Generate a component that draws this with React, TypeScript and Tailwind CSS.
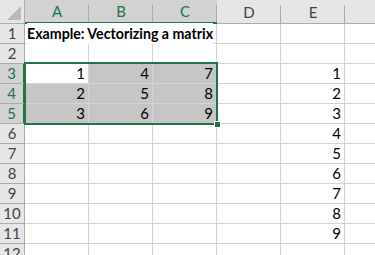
import React from "react";

const cols = ["A", "B", "C", "D", "E", ""];
const selCols = ["A", "B", "C"];

// values by row -> column
const data: Record<number, Record<string, string>> = {
  3: { A: "1", B: "4", C: "7", E: "1" },
  4: { A: "2", B: "5", C: "8", E: "2" },
  5: { A: "3", B: "6", C: "9", E: "3" },
  6: { E: "4" },
  7: { E: "5" },
  8: { E: "6" },
  9: { E: "7" },
  10: { E: "8" },
  11: { E: "9" },
};

function inSel(row: number, col: string) {
  return row >= 3 && row <= 5 && selCols.includes(col);
}

export default function App() {
  const rows = Array.from({ length: 12 }, (_, i) => i + 1);

  return (
    <div
      className="relative h-[255px] w-[375px] overflow-hidden bg-white text-[15px] text-black"
      style={{ fontFamily: "Lato, 'Liberation Sans', sans-serif" }}
    >
      {/* column headers */}
      <div className="flex h-[24px] bg-[#e6e6e6]">
        <div className="flex h-full w-[25px] shrink-0 items-end justify-end border-r border-b border-[#ababab] p-[3px]">
          <svg width="14" height="14" viewBox="0 0 14 14">
            <polygon points="14,0 14,14 0,14" fill="#b9b9b9" />
          </svg>
        </div>
        {cols.map((c, i) => {
          const sel = selCols.includes(c);
          return (
            <div
              key={i}
              className={
                sel
                  ? "relative flex h-full w-[64px] shrink-0 items-center justify-center bg-[#d2d2d2] pt-[1px] text-[#217346] border-b-2 border-[#217346]"
                  : "relative flex h-full w-[64px] shrink-0 items-center justify-center pt-[1px] text-[#444] border-b border-[#ababab]"
              }
            >
              {c}
              <div className="absolute top-[5px] right-0 bottom-0 w-px bg-[#ababab]" />
            </div>
          );
        })}
      </div>

      {rows.map((r) => {
        const rowSel = r >= 3 && r <= 5;
        return (
          <div key={r} className="flex h-[20px]">
            <div
              className={
                rowSel
                  ? "flex h-full w-[25px] shrink-0 items-center justify-center border-r-2 border-b border-r-[#217346] border-b-[#ababab] bg-[#d2d2d2] text-[#217346]"
                  : "flex h-full w-[25px] shrink-0 items-center justify-center border-r border-b border-[#ababab] bg-[#e6e6e6] text-[#444]"
              }
            >
              {r}
            </div>
            {cols.map((c, i) => {
              const val = data[r]?.[c];
              const active = r === 3 && c === "A";
              const shaded = inSel(r, c) && !active;
              const title = r === 1 && c === "A";
              return (
                <div
                  key={i}
                  className={
                    shaded
                      ? "flex h-full w-[64px] shrink-0 items-center justify-end border-r border-b border-[#d4d4d4] bg-[#c6c6c6] pr-[3px]"
                      : title
                        ? "relative z-10 flex h-full w-[64px] shrink-0 items-center overflow-visible border-r border-b border-[#d4d4d4] pl-[2px]"
                        : "flex h-full w-[64px] shrink-0 items-center justify-end border-r border-b border-[#d4d4d4] pr-[3px]"
                  }
                >
                  {title ? (
                    <span className="bg-white text-[14.2px] font-bold whitespace-nowrap">
                      Example: Vectorizing a matrix
                    </span>
                  ) : (
                    val
                  )}
                </div>
              );
            })}
          </div>
        );
      })}

      {/* selection border */}
      <div className="pointer-events-none absolute top-[62px] left-[24px] h-[63px] w-[194px] border-2 border-[#217346]">
        <div className="absolute -right-[5px] -bottom-[5px] h-[7px] w-[7px] border border-white bg-[#217346]" />
      </div>
    </div>
  );
}
